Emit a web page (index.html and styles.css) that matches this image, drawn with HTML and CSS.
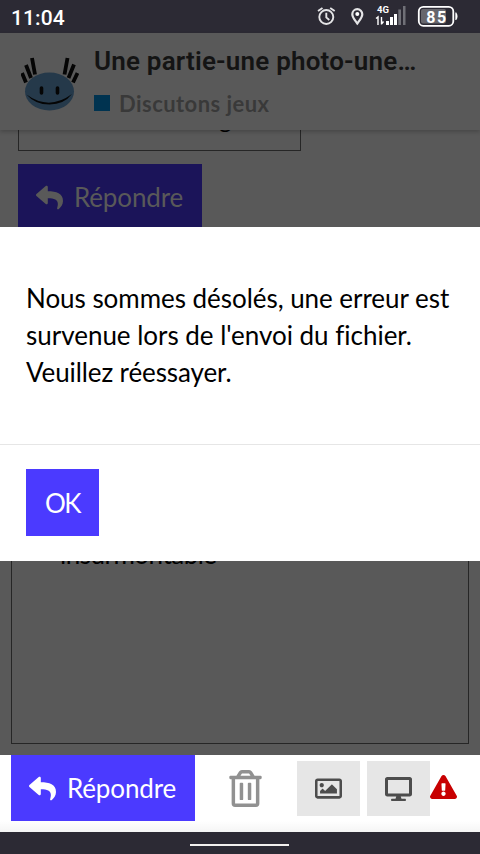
FILE: index.html
```html
<!DOCTYPE html>
<html lang="fr">
<head>
<meta charset="utf-8">
<title>Une partie-une photo</title>
<link rel="stylesheet" href="styles.css">
</head>
<body>
<svg class="defs" width="0" height="0">
  <symbol id="reply" viewBox="0 0 512 512"><path d="M8.309 189.836L184.313 37.851C199.719 24.546 224 35.347 224 56.015v80.053c160.629 1.839 288 34.032 288 186.258 0 61.441-39.581 122.309-83.333 154.132-13.653 9.931-33.111-2.533-28.077-18.631 45.344-145.012-21.507-183.51-176.59-185.742V360c0 20.7-24.3 31.453-39.687 18.164l-176.004-152c-11.071-9.562-11.086-26.753 0-36.328z"/></symbol>
</svg>
<div class="status">
  <span class="clock">11:04</span>
  <svg class="status-icons" viewBox="0 0 144 33" width="144" height="33">
    <g fill="none" stroke="#e4e4e6" stroke-width="1.9">
      <circle cx="10.300" cy="17" r="7"/><path d="M10.300 12.800v4.600l3 2.600M2 11l4.500-3M18.700 11l-4.500-3"/>
      <path stroke-width="2.200" d="M41.300 23.500c-2.800-3.800-5-6.200-5-9.300a5 5 0 0 1 10 0c0 3.100-2.200 5.500-5 9.300z"/>
    </g>
    <circle cx="41.300" cy="14" r="2" fill="#fff"/>
    <text class="net" x="61" y="13.300">4G</text>
    <path d="M60 18.500l2-1.500v8M65.500 17v7.500M67.500 21.500l-2 2.500" fill="none" stroke="#fff" stroke-width="1.400"/>
    <path d="M70 21h3v4h-3zM74 17h3v8h-3zM78 14h3v11h-3z" fill="#fff"/>
    <path d="M82.300 9.500h2.700V25h-2.700zM87 6h2.500v19H87z" fill="#707077"/>
    <rect x="102.800" y="6.800" width="34.500" height="19" rx="4.500" fill="none" stroke="#fff" stroke-width="1.800"/>
    <rect x="105" y="9" width="25" height="14.500" rx="2" fill="#67666c"/>
    <path d="M139.300 12.500h1q2.500 3.800 0 7.600h-1z" fill="#fff"/>
    <text class="level" x="110.300" y="22.800">85</text>
  </svg>
</div>
<header class="topic">
  <svg class="avatar" viewBox="0 0 58 56" width="58" height="56">
    <ellipse cx="28.500" cy="34.500" rx="24.500" ry="19" fill="#25394a"/>
    <g fill="none" stroke="#050505" stroke-width="3.800"><path d="M11 1L14 17.500M5 8L10 21M1 16L5 25.500M46.500 1L43.500 17.500M53 7.500L47.500 21M56.500 16L52 25.500"/></g>
    <g fill="none" stroke="#050505" stroke-width="3.600" stroke-linecap="round"><path d="M20.500 31v5M36.500 31v5"/></g>
    <path d="M5.500 37.500Q28 54 51 37Q43 47.500 28.500 47.500Q14 47.500 5.500 37.500z" fill="#050505"/>
  </svg>
  <div class="headings">
    <h1>Une partie-une photo-une…</h1>
    <div class="category"><i></i><span>Discutons jeux</span></div>
  </div>
</header>
<section class="posts">
  <div class="quote"><span>g</span></div>
  <button class="btn reply dim"><svg><use href="#reply"/></svg><span>Répondre</span></button>
</section>
<div class="dialog" role="dialog">
  <div class="message">
    <div class="l1">Nous sommes désolés, une erreur est</div>
    <div class="l2">survenue lors de l'envoi du fichier.</div>
    <div class="l3">Veuillez réessayer.</div>
  </div>
  <div class="actions"><button class="btn ok"><span>OK</span></button></div>
</div>
<section class="composer"><div class="editor"><span>insurmontable</span></div></section>
<footer class="submit">
  <button class="btn reply"><svg><use href="#reply"/></svg><span>Répondre</span></button>
  <svg class="trash" viewBox="0 0 448 512"><path d="M268 416h24a12 12 0 0 0 12-12V188a12 12 0 0 0-12-12h-24a12 12 0 0 0-12 12v216a12 12 0 0 0 12 12zM432 80h-82.410l-34-56.700A48 48 0 0 0 274.410 0H173.590a48 48 0 0 0-41.160 23.300L98.410 80H16A16 16 0 0 0 0 96v16a16 16 0 0 0 16 16h16v336a48 48 0 0 0 48 48h288a48 48 0 0 0 48-48V128h16a16 16 0 0 0 16-16V96a16 16 0 0 0-16-16zM171.840 50.910A6 6 0 0 1 177 48h94a6 6 0 0 1 5.150 2.910L293.610 80H154.390zM368 464H80V128h288zm-212-48h24a12 12 0 0 0 12-12V188a12 12 0 0 0-12-12h-24a12 12 0 0 0-12 12v216a12 12 0 0 0 12 12z"/></svg>
  <div class="tool"><svg class="picture" viewBox="0 0 512 512"><path d="M464 64H48C21.490 64 0 85.490 0 112v288c0 26.510 21.490 48 48 48h416c26.510 0 48-21.490 48-48V112c0-26.510-21.490-48-48-48zm-6 336H54a6 6 0 0 1-6-6V118a6 6 0 0 1 6-6h404a6 6 0 0 1 6 6v276a6 6 0 0 1-6 6zM128 152c-22.091 0-40 17.909-40 40s17.909 40 40 40 40-17.909 40-40-17.909-40-40-40zM96 352h320v-80l-87.515-87.515c-4.686-4.686-12.284-4.686-16.971 0L192 304l-39.515-39.515c-4.686-4.686-12.284-4.686-16.971 0L96 304v48z"/></svg></div>
  <div class="tool"><svg viewBox="0 0 576 512"><path d="M528 0H48C21.500 0 0 21.500 0 48v320c0 26.500 21.500 48 48 48h192l-16 48h-72c-13.300 0-24 10.700-24 24s10.700 24 24 24h272c13.300 0 24-10.700 24-24s-10.700-24-24-24h-72l-16-48h192c26.500 0 48-21.500 48-48V48c0-26.500-21.500-48-48-48zm-16 352H64V64h448v288z"/></svg></div>
  <svg class="warn" viewBox="0 0 576 512"><path d="M569.517 440.013C587.975 472.007 564.806 512 527.940 512H48.054c-36.937 0-59.999-40.055-41.577-71.987L246.423 23.985c18.467-32.009 64.720-31.951 83.154 0l239.940 416.028zM288 354c-25.405 0-46 20.595-46 46s20.595 46 46 46 46-20.595 46-46-20.595-46-46-46zm-43.673-165.346l7.418 136c.347 6.364 5.609 11.346 11.982 11.346h48.546c6.373 0 11.635-4.982 11.982-11.346l7.418-136c.375-6.874-5.098-12.654-11.982-12.654h-63.383c-6.884 0-12.356 5.780-11.981 12.654z"/></svg>
</footer>
<nav class="gesture"><i></i></nav>
</body>
</html>
```
FILE: styles.css
```css
* { box-sizing: border-box; }
body {
  margin: 0;
  width: 480px;
  height: 854px;
  overflow: hidden;
  display: flex;
  flex-direction: column;
  background: #595959;
  font-family: Lato, sans-serif;
  font-size: 26px;
  font-variant-ligatures: none;
  white-space: nowrap;
}
body > * { flex: none; }
.defs { position: absolute; }
svg { display: block; }

.status {
  height: 33px;
  display: flex;
  justify-content: space-between;
  padding: 0 20px 0 11px;
  background: #2c2a34;
  color: #fff;
}
.clock { font: 500 21px/36px Roboto, sans-serif; letter-spacing: 0.1px; }
.net { font: bold 9.5px Roboto, sans-serif; fill: #fff; }
.level { font: bold 16px Roboto, sans-serif; fill: #fff; letter-spacing: 1.5px; }

.topic {
  height: 97px;
  display: flex;
  gap: 15px;
  padding-left: 21px;
  box-shadow: 0 2px 4px rgba(0, 0, 0, .2);
  z-index: 1;
}
.avatar { margin-top: 24px; }
h1 {
  margin: 12px 0 0;
  font: 600 26px/33px Roboto, sans-serif;
  letter-spacing: 0.2px;
  color: #141414;
}
.category {
  display: flex;
  align-items: center;
  gap: 9px;
  height: 30px;
  margin-top: 10px;
  color: #393939;
  font-weight: 700;
  font-size: 22px;
  letter-spacing: 0.45px;
}
.category i { width: 16px; height: 16px; background: #003350; }

.posts { height: 97px; padding-left: 18px; overflow: hidden; }
.quote {
  width: 283px;
  height: 21px;
  border: 1px solid #262626;
  border-top: 0;
  margin-bottom: 13px;
  overflow: hidden;
}
.quote span { display: block; margin: -27px 0 0 200px; line-height: 32px; font-size: 24px; color: #000; }
.btn {
  display: flex;
  align-items: center;
  border: 0;
  border-radius: 0;
  padding: 0;
  background: #4b3aff;
  color: #fff;
  font: 400 26px/32px Lato, sans-serif;
  letter-spacing: -0.15px;
}
.reply { width: 184px; height: 66px; padding-left: 18px; gap: 11px; }
.reply svg { width: 27px; height: 27px; fill: currentColor; }
.dim { background: #1b1459; color: #595959; }

.dialog { height: 334px; background: #fff; color: #000; }
.message { height: 218px; padding: 53px 26px 0; line-height: 37px; border-bottom: 1px solid #e6e6e6; }
.l1 { letter-spacing: -0.04px; }
.l2 { letter-spacing: -0.02px; }
.l3 { letter-spacing: -0.1px; }
.actions { padding: 24px 26px; }
.ok { width: 73px; height: 67px; justify-content: center; letter-spacing: -1.5px; }

.composer { height: 194px; padding: 0 11px 11px; }
.editor { height: 183px; border: 1px solid #262626; border-top: 0; overflow: hidden; }
.editor span { display: block; margin: -23px 0 0 48px; line-height: 32px; letter-spacing: -0.5px; color: #000; }

.submit {
  height: 77px;
  display: flex;
  align-items: flex-start;
  padding-left: 11px;
  background: linear-gradient(#fff 66px, #f5f5f5);
}
.trash { width: 33px; height: 37px; margin: 15px 35px 0 34px; fill: #919191; }
.tool {
  width: 63px;
  height: 55px;
  margin-top: 6px;
  display: flex;
  align-items: center;
  justify-content: center;
  background: #e6e6e6;
}
.tool + .tool { margin-left: 7px; }
.tool svg { width: 27px; height: 24px; fill: #4d4d4d; }
.tool .picture { height: 27px; }
.warn { width: 27px; height: 24px; margin-top: 20px; fill: #c80001; }

.gesture { height: 22px; background: #2c2a34; display: flex; padding: 12px 0 0 190px; }
.gesture i { width: 99px; height: 2px; background: #f2f0ee; }
```
